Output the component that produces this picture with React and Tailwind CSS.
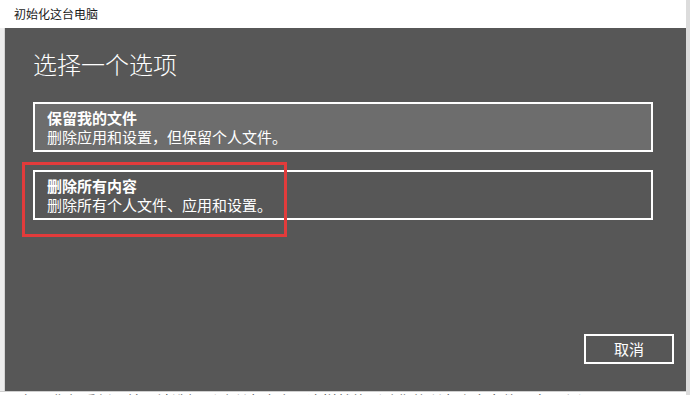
import React from "react";

const font = { fontFamily: '"Noto Sans CJK SC", "Noto Sans", sans-serif' };

function Option({ title, desc, active }) {
  return (
    <div
      className={`w-[620px] h-[50px] border-2 border-white pl-[12px] pt-[4px] ${
        active ? "bg-[#6d6d6d]" : ""
      }`}
    >
      <div className="text-[15px] leading-[19px] font-bold text-white">{title}</div>
      <div className="text-[15px] leading-[20px] text-white">{desc}</div>
    </div>
  );
}

export default function App() {
  return (
    <div className="relative w-[690px] h-[395px] overflow-hidden bg-white flex" style={font}>
      <div className="flex-1 min-w-0 flex flex-col">
        <div className="h-[28px] flex items-center pl-[14px] text-[12px] text-[#1a1a1a] bg-white">
          初始化这台电脑
        </div>
        <div className="flex h-[363px]">
          <div className="w-[5px] bg-[#ededed] border-r border-[#d4d4d4]" />
          <div className="flex-1 bg-[#575757] flex flex-col">
            <h1 className="pl-[28px] pt-[20px] text-[24px] leading-[32px] font-light text-white">
              选择一个选项
            </h1>
            <div className="pl-[28px] pt-[22px] flex flex-col gap-[18px]">
              <Option title="保留我的文件" desc="删除应用和设置，但保留个人文件。" active />
              <Option title="删除所有内容" desc="删除所有个人文件、应用和设置。" />
            </div>
            <div className="flex-1" />
            <div className="flex justify-end pr-[12px] pb-[27px]">
              <button className="w-[90px] h-[30px] border-2 border-white text-white text-[15px] leading-[20px]">
                取消
              </button>
            </div>
          </div>
        </div>
        <div className="h-[4px] border-t border-[#cfcfcf] bg-white overflow-hidden pl-[22px]">
          <div className="text-[15px] leading-[20px] text-[#555] -mt-[1px] whitespace-nowrap">
            如果你想重新开始，请选择删除所有内容，这样就能删除你的所有个人文件、应用和设置。
          </div>
        </div>
      </div>
      <div className="w-[4px] bg-[#dcdcdc]" />

      <div className="absolute left-[22px] top-[162px] w-[265px] h-[75px] border-[3px] border-[#e23b3b]" />
    </div>
  );
}
